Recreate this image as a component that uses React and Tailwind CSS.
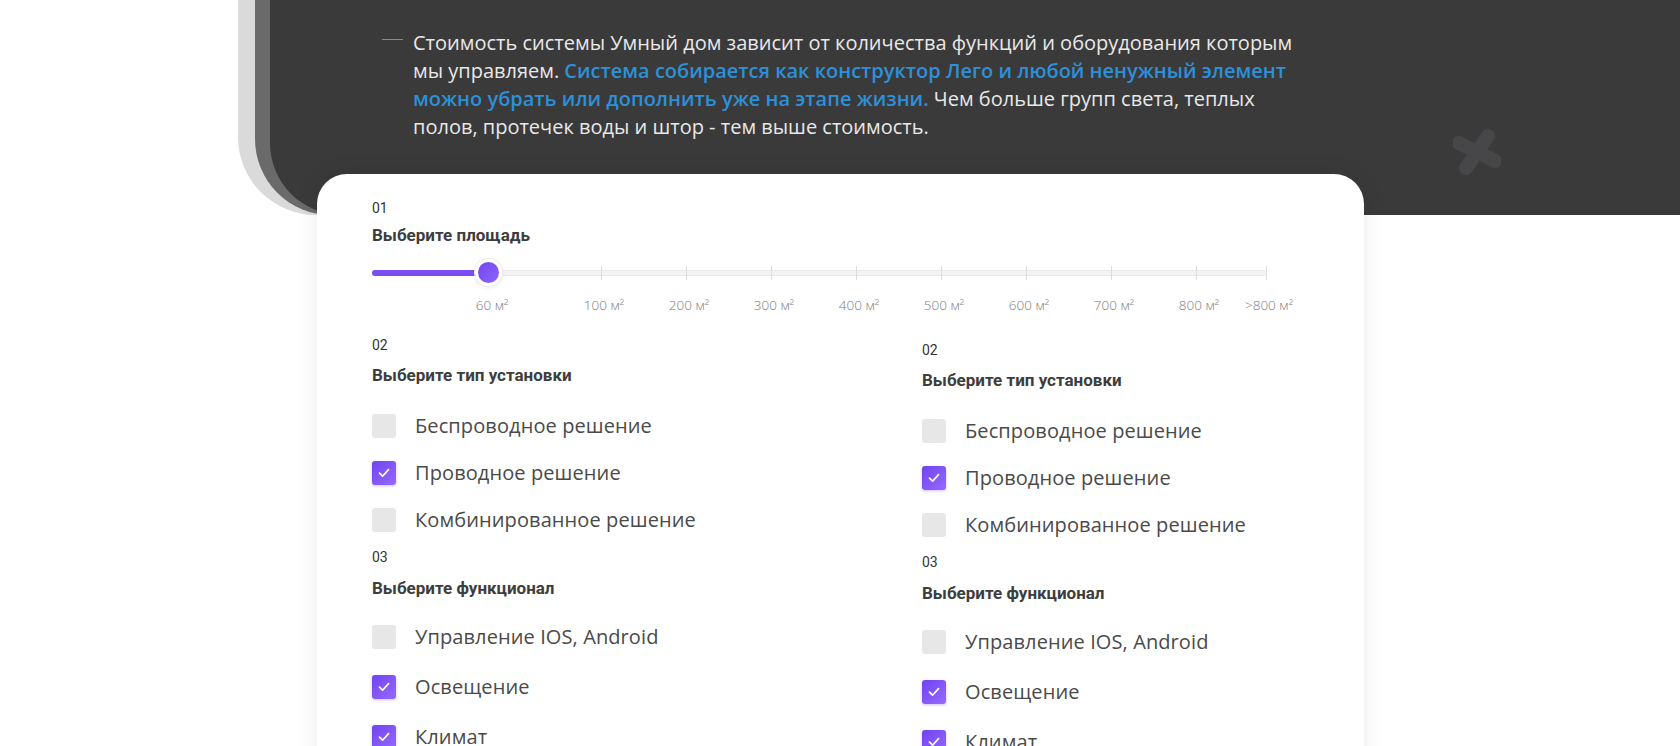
import React from "react";

const ticks = [229, 314, 399, 484, 569, 654, 739, 824, 894];
const labels = [
  { x: 117, t: "60" },
  { x: 229, t: "100" },
  { x: 314, t: "200" },
  { x: 399, t: "300" },
  { x: 484, t: "400" },
  { x: 569, t: "500" },
  { x: 654, t: "600" },
  { x: 739, t: "700" },
  { x: 824, t: "800" },
  { x: 894, t: ">800" },
];

function Check({ checked, label }) {
  return (
    <div className="flex items-center h-full">
      {checked ? (
        <div className="w-[24px] h-[24px] rounded-[3px] bg-gradient-to-br from-[#6f43f0] to-[#9868ff] flex items-center justify-center shadow-[0_1px_3px_rgba(110,70,240,0.35)]">
          <svg width="12" height="10" viewBox="0 0 12 10" fill="none">
            <path d="M1.5 5.2 L4.6 8.2 L10.5 1.6" stroke="white" strokeWidth="1.7" strokeLinecap="round" strokeLinejoin="round" />
          </svg>
        </div>
      ) : (
        <div className="w-[24px] h-[24px] rounded-[3px] bg-[#e7e7e7]" />
      )}
      <span className="ml-[19px] text-[20px] text-[#4a4a4a] font-['Open_Sans',sans-serif] tracking-[0.1px]">{label}</span>
    </div>
  );
}

function Num({ n }) {
  return <div className="h-[20px] leading-[20px] text-[14px] text-[#333] font-['Roboto',sans-serif]">{n}</div>;
}

function Title({ children, className = "" }) {
  return (
    <div className={"h-[24px] leading-[24px] text-[17px] font-bold text-[#3d3d3d] font-['Roboto',sans-serif] " + className}>
      {children}
    </div>
  );
}

function Column({ className = "" }) {
  return (
    <div className={"flex flex-col " + className}>
      <Num n="02" />
      <Title className="mt-[8px]">Выберите тип установки</Title>
      <div className="mt-[15px] flex flex-col">
        <div className="h-[47px]"><Check label="Беспроводное решение" /></div>
        <div className="h-[47px]"><Check checked label="Проводное решение" /></div>
        <div className="h-[47px]"><Check label="Комбинированное решение" /></div>
      </div>
      <div className="mt-[4px]"><Num n="03" /></div>
      <Title className="mt-[9px]">Выберите функционал</Title>
      <div className="mt-[12px] flex flex-col">
        <div className="h-[50px]"><Check label="Управление IOS, Android" /></div>
        <div className="h-[50px]"><Check checked label="Освещение" /></div>
        <div className="h-[50px]"><Check checked label="Климат" /></div>
      </div>
    </div>
  );
}

function Slider() {
  return (
    <div className="relative h-[88px] w-[894px]">
      <div className="absolute left-0 top-[23px] w-[894px] h-[6px] rounded-full bg-[#f3f3f3] border-y border-[#ebebeb]" />
      {ticks.map((x) => (
        <div key={x} className="absolute top-[19px] w-px h-[14px] bg-[#dcdcdc]" style={{ left: x }} />
      ))}
      <div className="absolute left-0 top-[23px] w-[118px] h-[6px] rounded-full bg-[#7a4ef3]" />
      <div className="absolute left-[103px] top-[12px] w-[27px] h-[27px] rounded-full bg-gradient-to-br from-[#7346f0] to-[#8f63fb] border-[3px] border-white shadow-[0_0_0_1px_#ececec,0_1px_4px_rgba(0,0,0,0.12)]" />
      {labels.map((l) => (
        <div
          key={l.t}
          className="absolute top-[49px] h-[18px] leading-[18px] whitespace-nowrap text-[13.5px] font-light text-[#7a7a7a] font-['Open_Sans',sans-serif] -translate-x-1/2"
          style={{ left: l.x + 3 }}
        >
          {l.t} м²
        </div>
      ))}
    </div>
  );
}

export default function App() {
  return (
    <div className="relative w-full h-[746px] overflow-hidden bg-white">
      <div className="ml-[238px] h-[215px] bg-[#dadada] rounded-bl-[78px]">
        <div className="ml-[17px] h-full bg-[#6a6a6a] rounded-bl-[76px]">
          <div className="relative ml-[15px] h-full bg-[#3a3a3a] rounded-bl-[72px]">
            <div className="flex pl-[112px] pt-[29px]">
              <div className="w-[21px] h-px bg-[#8a8a8a] mt-[10px] shrink-0" />
              <p className="ml-[10px] text-[20px] leading-[28px] text-[#e8e8e8] font-['Open_Sans',sans-serif] whitespace-nowrap">
                Стоимость системы Умный дом зависит от количества функций и оборудования которым
                <br />
                мы управляем.{" "}
                <span className="font-semibold text-[#2d90d8]">Система собирается как конструктор Лего и любой ненужный элемент</span>
                <br />
                <span className="font-semibold text-[#2d90d8]">можно убрать или дополнить уже на этапе жизни.</span> Чем больше групп света, теплых
                <br />
                полов, протечек воды и штор - тем выше стоимость.
              </p>
            </div>
            <svg className="absolute left-[1183px] top-[128px]" width="48" height="48" viewBox="0 0 48 48">
              <g stroke="#47474a" strokeWidth="14" strokeLinecap="round">
                <line x1="35" y1="8" x2="13" y2="40" />
                <line x1="6" y1="15" x2="42" y2="33" />
              </g>
            </svg>
          </div>
        </div>
      </div>

      <div className="relative z-10 -mt-[41px] ml-[317px] w-[1047px] h-[640px] bg-white rounded-t-[30px] shadow-[0_0_24px_rgba(0,0,0,0.08)] pl-[55px] pt-[24px]">
        <Num n="01" />
        <Title className="mt-[5px]">Выберите площадь</Title>
        <Slider />
        <div className="flex">
          <Column className="w-[550px]" />
          <Column className="mt-[5px]" />
        </div>
      </div>
    </div>
  );
}
